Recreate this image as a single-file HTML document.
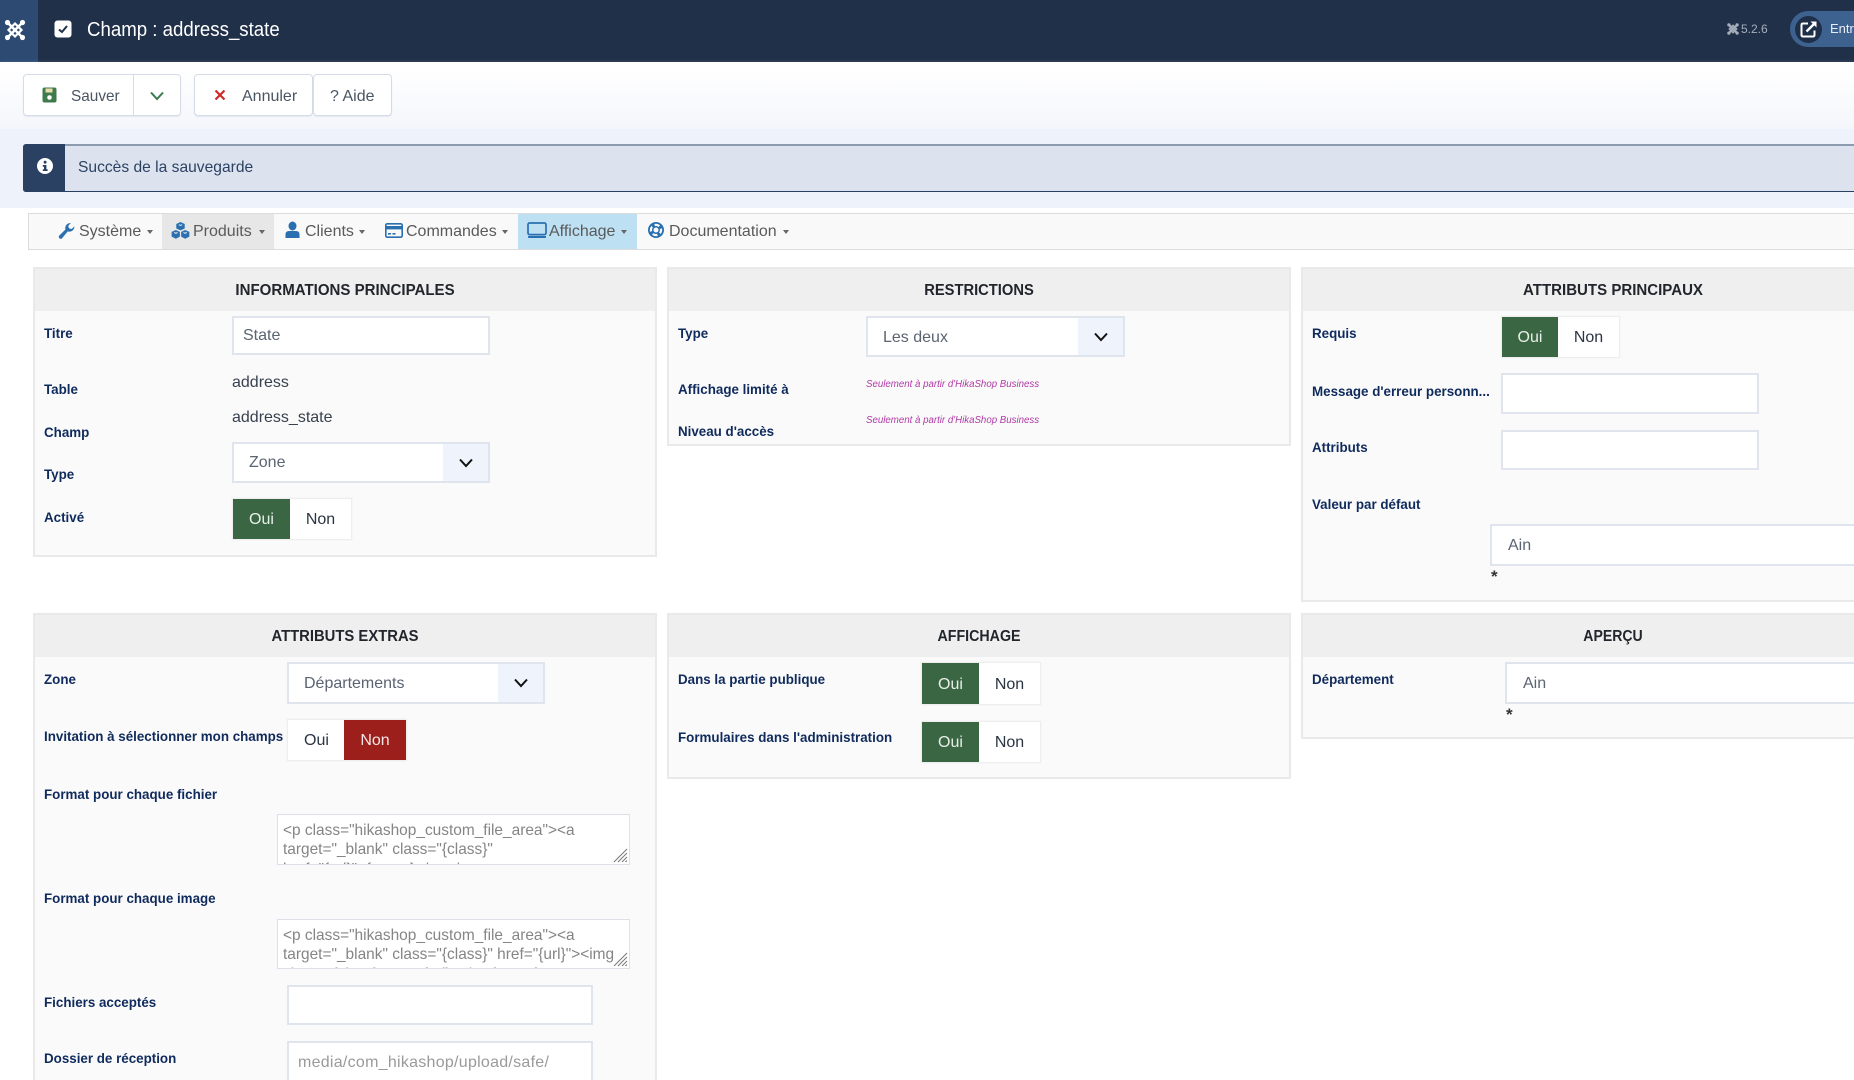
<!DOCTYPE html>
<html lang="fr"><head><meta charset="utf-8"><title>Champ : address_state</title>
<style>
html,body{margin:0;padding:0;width:1854px;height:1080px;overflow:hidden;background:#fff}
body{position:relative;font-family:"Liberation Sans",sans-serif;color:#333}
div,span,svg{position:absolute;box-sizing:border-box}
.t{white-space:nowrap;height:20px;line-height:20px}
.l{font-weight:bold;font-size:14px;color:#0f2a5c;white-space:nowrap;height:20px;line-height:20px;transform:scaleX(.955);transform-origin:0 50%}
.p{background:#fafafa;border:2px solid #e9e9e9;overflow:hidden}
.h{left:0;right:0;top:0;background:#efefef;height:42px}
.pt{font-weight:bold;font-size:16px;color:#22262c;text-align:center;white-space:nowrap;height:20px;line-height:20px;top:11.5px;left:0;right:0}
.i{background:#fff;border:2px solid #e0e4ec}
.v{font-size:16px;color:#5a6472;white-space:nowrap;height:20px;line-height:20px}
.ar{top:0;bottom:0;right:0;width:45px;background:#eff3fb}
.tg{background:#fff;border:1px solid #eeeeee;box-shadow:0 0 1px #e8e8e8}
.on{background:#3a6644;top:0;bottom:0;left:0}
.no{background:#9c1f1c;top:0;bottom:0;right:0}
.tt{font-size:16px;text-align:center;top:2px;bottom:0;display:flex;align-items:center;justify-content:center}
.btn{background:#fff;border:1px solid #d5dce8;border-radius:4px;box-shadow:0 1px 1px rgba(200,210,225,.4);height:42px;top:74px}
.m{font-size:16px;color:#5a5a5a;white-space:nowrap;height:20px;line-height:20px;top:222px}
.c{width:0;height:0;border-left:3.5px solid transparent;border-right:3.5px solid transparent;border-top:4px solid #666;top:230px}
.ta{background:#fff;border:1px solid #dde0e8;overflow:hidden;font-size:15.6px;line-height:19.5px;color:#858585}
.ta .x{left:5px;white-space:nowrap;height:20px;line-height:20px;transform:scaleX(.99);transform-origin:0 50%}
.s{font-family:"Liberation Sans",sans-serif;font-size:9.7px;font-style:italic;color:#b03aa6;white-space:nowrap;height:14px;line-height:14px}
.st{font-size:17px;font-weight:bold;color:#333;white-space:nowrap;height:20px;line-height:20px}
</style></head><body>

<!-- header -->
<div style="left:0;top:0;width:1854px;height:62px;background:#203048"></div>
<div style="left:0;top:0;width:38px;height:62px;background:#2c4a72"></div>
<svg style="left:4px;top:19px" width="22" height="22" viewBox="0 0 22 22" fill="none" stroke="#fff"><path d="M4 4 L18 18 M18 4 L4 18" stroke-width="2.6"/><path d="M11 4.5 L17.5 11 L11 17.5 L4.5 11 Z" stroke-width="2.2"/><circle cx="3.5" cy="3.5" r="2.6" fill="#fff" stroke="none"/><circle cx="18.5" cy="3.5" r="2.6" fill="#fff" stroke="none"/><circle cx="3.5" cy="18.5" r="2.6" fill="#fff" stroke="none"/><circle cx="18.5" cy="18.5" r="2.6" fill="#fff" stroke="none"/></svg>
<svg style="left:54px;top:20px" width="18" height="18" viewBox="0 0 18 18"><rect x="0.5" y="0.5" width="17" height="17" rx="3" fill="#fff"/><path d="M5 9.5 L8 12 L13 6" fill="none" stroke="#203048" stroke-width="2"/></svg>
<div class="t" style="left:87px;top:20px;font-size:20px;color:#fff;transform:scaleX(.932);transform-origin:0 50%">Champ : address_state</div>
<svg style="left:1727px;top:23px" width="12" height="12" viewBox="0 0 22 22" fill="none" stroke="#a6aebb"><path d="M4 4 L18 18 M18 4 L4 18" stroke-width="4"/><path d="M11 4.5 L17.5 11 L11 17.5 L4.5 11 Z" stroke-width="3"/><circle cx="3.5" cy="3.5" r="3" fill="#a6aebb" stroke="none"/><circle cx="18.5" cy="3.5" r="3" fill="#a6aebb" stroke="none"/><circle cx="3.5" cy="18.5" r="3" fill="#a6aebb" stroke="none"/><circle cx="18.5" cy="18.5" r="3" fill="#a6aebb" stroke="none"/></svg>
<div class="t" style="left:1741px;top:19px;font-size:12px;color:#a6aebb">5.2.6</div>
<div style="left:1790px;top:11px;width:90px;height:36px;border-radius:18px;background:#3e6290"></div>
<div style="left:1795px;top:16px;width:27px;height:27px;border-radius:50%;background:#1f2f48"></div>
<svg style="left:1800px;top:20px" width="18" height="18" viewBox="0 0 18 18" fill="none" stroke="#fff" stroke-width="2"><path d="M8 3.5 H3 Q1.5 3.5 1.5 5 V15 Q1.5 16.5 3 16.5 H13 Q14.5 16.5 14.5 15 V10.5"/><path d="M6.5 11.5 L15.5 2.5" stroke-width="2.4"/><path d="M10.5 1.5 H16.5 V7.5 Z" fill="#fff" stroke="none"/></svg>
<div class="t" style="left:1830px;top:19px;font-size:13px;color:#e8edf4">Entrer</div>

<!-- toolbar -->
<div style="left:0;top:62px;width:1854px;height:67px;background:linear-gradient(#fff 10%,#f4f6fb);box-shadow:0 1px 4px rgba(180,195,215,.45)"></div>
<div style="left:0;top:129px;width:1854px;height:79px;background:#eef3fb"></div>
<div class="btn" style="left:23px;width:158px"></div>
<div style="left:133px;top:74px;width:1px;height:42px;background:#d5dce8"></div>
<svg style="left:42px;top:87px" width="15" height="16" viewBox="0 0 15 16"><rect x="0.5" y="0.5" width="14" height="15" rx="2" fill="#3f7a4c"/><rect x="3.5" y="1.5" width="7" height="4" fill="#e8dcae"/><circle cx="7.5" cy="10.5" r="2.3" fill="#fff"/></svg>
<div class="t" style="left:71px;top:86.5px;font-size:16px;color:#4a5563;transform:scaleX(.96);transform-origin:0 50%">Sauver</div>
<svg style="left:149px;top:90px" width="16" height="12" viewBox="0 0 16 12" fill="none" stroke="#3a7a50" stroke-width="2"><path d="M2 2.5 L8 9 L14 2.5"/></svg>
<div class="btn" style="left:194px;width:119px"></div>
<svg style="left:214px;top:89px" width="12" height="12" viewBox="0 0 12 12" fill="none" stroke="#cf2a2a" stroke-width="2.2"><path d="M1.5 1.5 L10.5 10.5 M10.5 1.5 L1.5 10.5"/></svg>
<div class="t" style="left:242px;top:86.5px;font-size:16px;color:#4a5563">Annuler</div>
<div class="btn" style="left:313px;width:79px"></div>
<div class="t" style="left:330px;top:86.5px;font-size:16px;color:#4a5563">? Aide</div>

<!-- alert -->
<div style="left:23px;top:144px;width:1840px;height:48px;background:#dce3ef;border-top:2px solid #8d9bb0;border-bottom:1px solid #2a4163;border-radius:3px 0 0 3px"></div>
<div style="left:23px;top:144px;width:42px;height:48px;background:#2a4163;border-radius:3px 0 0 3px"></div>
<svg style="left:37px;top:158px" width="16" height="16" viewBox="0 0 16 16"><circle cx="8" cy="8" r="8" fill="#fff"/><rect x="6.7" y="2.8" width="2.8" height="2.8" rx="1" fill="#2a4163"/><path d="M5.8 7 H9.4 V11.2 H10.6 V13 H5.8 V11.2 H7 V8.8 H5.8 Z" fill="#2a4163"/></svg>
<div class="t" style="left:78px;top:158px;font-size:16px;color:#2c4263;transform:scaleX(.975);transform-origin:0 50%">Succès de la sauvegarde</div>

<!-- content bg -->
<div style="left:23px;top:208px;width:1831px;height:872px;background:#fff"></div>

<!-- menu -->
<div style="left:28px;top:213px;width:1830px;height:37px;background:#f9f9f9;border:1px solid #dcdcdc"></div>
<div style="left:162px;top:214px;width:112px;height:35px;background:#e7e7e7"></div>
<div style="left:518px;top:214px;width:119px;height:35px;background:#bde0f3"></div>
<svg style="left:58px;top:222px" width="17" height="18" viewBox="0 0 16 17"><path d="M15.5 4.2 A4.8 4.8 0 0 1 9.2 8.9 L3.6 15.6 A1.9 1.9 0 0 1 1 13 L7 7.1 A4.8 4.8 0 0 1 12 1 L9.6 3.8 L10.4 6 L12.8 6.6 Z" fill="#2a70b0"/></svg>
<div class="m" style="left:79px">Système</div><div class="c" style="left:147px"></div>
<svg style="left:171px;top:221px" width="19" height="19" viewBox="0 0 18 17" fill="#2a70b0"><path d="M9 0.5 L13 2.3 V6.6 L9 8.4 L5 6.6 V2.3 Z"/><path d="M4.6 8 L8.4 9.8 V14.3 L4.6 16.3 L0.6 14.3 V9.8 Z"/><path d="M13.4 8 L17.4 9.8 V14.3 L13.4 16.3 L9.6 14.3 V9.8 Z"/><path d="M7.4 3 L9 3.7 L10.6 3 M3 10.4 L4.6 11.1 L6.2 10.4 M11.8 10.4 L13.4 11.1 L15 10.4" stroke="#e7e7e7" fill="none"/></svg>
<div class="m" style="left:193px">Produits</div><div class="c" style="left:259px"></div>
<svg style="left:285px;top:221px" width="15" height="18" viewBox="0 0 15 17" fill="#2a70b0"><ellipse cx="7.5" cy="4.5" rx="4" ry="4.5"/><path d="M0.5 16.5 V13 Q0.5 9.5 4 9.5 H11 Q14.5 9.5 14.5 13 V16.5 Z"/></svg>
<div class="m" style="left:305px">Clients</div><div class="c" style="left:359px"></div>
<svg style="left:385px;top:223px" width="18" height="15" viewBox="0 0 18 15"><rect x="0.8" y="0.8" width="16.4" height="13.4" rx="1.5" fill="none" stroke="#2a70b0" stroke-width="1.6"/><rect x="1" y="3" width="16" height="3.4" fill="#2a70b0"/><rect x="3" y="10" width="3" height="1.6" fill="#2a70b0"/><rect x="7.5" y="10" width="3" height="1.6" fill="#2a70b0"/></svg>
<div class="m" style="left:406px">Commandes</div><div class="c" style="left:502px"></div>
<svg style="left:527px;top:222px" width="20" height="17" viewBox="0 0 20 17"><rect x="1" y="1" width="18" height="11.6" rx="1.6" fill="none" stroke="#2a70b0" stroke-width="1.7"/><path d="M1 14 H19 V15 Q19 16 18 16 H2 Q1 16 1 15 Z" fill="#2a70b0"/></svg>
<div class="m" style="left:549px">Affichage</div><div class="c" style="left:621px"></div>
<svg style="left:648px;top:222px" width="16" height="16" viewBox="0 0 16 16"><circle cx="8" cy="8" r="8" fill="#2a70b0"/><circle cx="8" cy="8" r="5.1" fill="none" stroke="#f9f9f9" stroke-width="2.2" stroke-dasharray="5 3" stroke-dashoffset="-6.5"/><circle cx="8" cy="8" r="2.5" fill="#f9f9f9"/></svg>
<div class="m" style="left:669px">Documentation</div><div class="c" style="left:783px"></div>

<!-- Panels -->
<div class="p" style="left:33px;top:267px;width:624px;height:290px"><div class="h"></div><div class="pt" style="transform:scaleX(.94)">INFORMATIONS PRINCIPALES</div></div>
<div class="p" style="left:667px;top:267px;width:624px;height:179px"><div class="h"></div><div class="pt" style="transform:scaleX(.92)">RESTRICTIONS</div></div>
<div class="p" style="left:1301px;top:267px;width:624px;height:335px"><div class="h"></div><div class="pt" style="transform:scaleX(.94)">ATTRIBUTS PRINCIPAUX</div></div>
<div class="p" style="left:33px;top:613px;width:624px;height:500px"><div class="h"></div><div class="pt" style="transform:scaleX(.926)">ATTRIBUTS EXTRAS</div></div>
<div class="p" style="left:667px;top:613px;width:624px;height:166px"><div class="h"></div><div class="pt" style="transform:scaleX(.89)">AFFICHAGE</div></div>
<div class="p" style="left:1301px;top:613px;width:624px;height:126px"><div class="h"></div><div class="pt" style="transform:scaleX(.88)">APERÇU</div></div>

<!-- Panel 1 -->
<div class="l" style="left:44px;top:323px">Titre</div>
<div class="i" style="left:232px;top:316px;width:258px;height:39px"></div>
<div class="v" style="left:243px;top:326px">State</div>
<div class="l" style="left:44px;top:379px">Table</div>
<div class="t" style="left:232px;top:373px;font-size:16px;color:#38414e">address</div>
<div class="t" style="left:232px;top:408px;font-size:16px;color:#38414e">address_state</div>
<div class="l" style="left:44px;top:422px">Champ</div>
<div class="i" style="left:232px;top:442px;width:258px;height:41px"><div class="ar"></div></div>
<svg style="left:458px;top:457px" width="16" height="12" viewBox="0 0 16 12" fill="none" stroke="#111" stroke-width="2"><path d="M2 2.5 L8 9 L14 2.5"/></svg>
<div class="v" style="left:249px;top:453px">Zone</div>
<div class="l" style="left:44px;top:464px">Type</div>
<div class="l" style="left:44px;top:507px">Activé</div>
<div class="tg" style="left:232px;top:498px;width:120px;height:42px"><div class="on" style="width:57px"></div><div class="tt" style="left:0;width:57px;color:#e8efe8">Oui</div><div class="tt" style="left:57px;right:0;color:#2a3442">Non</div></div>

<!-- Panel 2 -->
<div class="l" style="left:678px;top:323px">Type</div>
<div class="i" style="left:866px;top:316px;width:259px;height:41px"><div class="ar"></div></div>
<svg style="left:1093px;top:331px" width="16" height="12" viewBox="0 0 16 12" fill="none" stroke="#111" stroke-width="2"><path d="M2 2.5 L8 9 L14 2.5"/></svg>
<div class="v" style="left:883px;top:328px">Les deux</div>
<div class="l" style="left:678px;top:379px">Affichage limité à</div>
<div class="s" style="left:866px;top:378px">Seulement à partir d'HikaShop Business</div>
<div class="s" style="left:866px;top:414px">Seulement à partir d'HikaShop Business</div>
<div class="l" style="left:678px;top:421px">Niveau d'accès</div>

<!-- Panel 3 -->
<div class="l" style="left:1312px;top:323px">Requis</div>
<div class="tg" style="left:1501px;top:316px;width:119px;height:42px"><div class="on" style="width:56px"></div><div class="tt" style="left:0;width:56px;color:#e8efe8">Oui</div><div class="tt" style="left:56px;right:0;color:#2a3442">Non</div></div>
<div class="l" style="left:1312px;top:381px">Message d'erreur personn...</div>
<div class="i" style="left:1501px;top:373px;width:258px;height:41px"></div>
<div class="l" style="left:1312px;top:437px">Attributs</div>
<div class="i" style="left:1501px;top:430px;width:258px;height:40px"></div>
<div class="l" style="left:1312px;top:494px">Valeur par défaut</div>
<div class="i" style="left:1490px;top:524px;width:400px;height:42px"></div>
<div class="v" style="left:1508px;top:536px">Ain</div>
<div class="st" style="left:1491px;top:567px">*</div>

<!-- Panel 4 -->
<div class="l" style="left:44px;top:669px">Zone</div>
<div class="i" style="left:287px;top:662px;width:258px;height:42px"><div class="ar"></div></div>
<svg style="left:513px;top:677px" width="16" height="12" viewBox="0 0 16 12" fill="none" stroke="#111" stroke-width="2"><path d="M2 2.5 L8 9 L14 2.5"/></svg>
<div class="v" style="left:304px;top:674px">Départements</div>
<div class="l" style="left:44px;top:726px">Invitation à sélectionner mon champs</div>
<div class="tg" style="left:287px;top:719px;width:120px;height:42px"><div class="no" style="width:62px"></div><div class="tt" style="left:0;width:57px;color:#2a3442">Oui</div><div class="tt" style="right:0;width:62px;color:#f3e6e6">Non</div></div>
<div class="l" style="left:44px;top:784px">Format pour chaque fichier</div>
<div class="ta" style="left:277px;top:814px;width:353px;height:51px">
<div class="x" style="top:6px">&lt;p class="hikashop_custom_file_area"&gt;&lt;a</div>
<div class="x" style="top:25px">target="_blank" class="{class}"</div>
<div class="x" style="top:45px">href="{url}"&gt;{name}&lt;/a&gt;&lt;/p&gt;</div>
<svg style="right:1px;bottom:1px" width="15" height="15" viewBox="0 0 15 15" stroke="#777" stroke-width="1"><path d="M1 14 L14 1 M5 14 L14 5 M9 14 L14 9 M12.5 14 L14 12.5"/></svg></div>
<div class="l" style="left:44px;top:888px">Format pour chaque image</div>
<div class="ta" style="left:277px;top:919px;width:353px;height:50px">
<div class="x" style="top:6px">&lt;p class="hikashop_custom_file_area"&gt;&lt;a</div>
<div class="x" style="top:25px">target="_blank" class="{class}" href="{url}"&gt;&lt;img</div>
<div class="x" style="top:45px">class="{class}" src="{url}" alt="{name}"</div>
<svg style="right:1px;bottom:1px" width="15" height="15" viewBox="0 0 15 15" stroke="#777" stroke-width="1"><path d="M1 14 L14 1 M5 14 L14 5 M9 14 L14 9 M12.5 14 L14 12.5"/></svg></div>
<div class="l" style="left:44px;top:992px">Fichiers acceptés</div>
<div class="i" style="left:287px;top:985px;width:306px;height:40px"></div>
<div class="l" style="left:44px;top:1048px">Dossier de réception</div>
<div class="i" style="left:287px;top:1041px;width:306px;height:60px"></div>
<div class="t" style="left:298px;top:1053px;font-size:16px;color:#9a9a9a;letter-spacing:.27px">media/com_hikashop/upload/safe/</div>

<!-- Panel 5 -->
<div class="l" style="left:678px;top:669px">Dans la partie publique</div>
<div class="tg" style="left:921px;top:662px;width:120px;height:43px"><div class="on" style="width:57px"></div><div class="tt" style="left:0;width:57px;color:#e8efe8">Oui</div><div class="tt" style="left:57px;right:0;color:#2a3442">Non</div></div>
<div class="l" style="left:678px;top:727px">Formulaires dans l'administration</div>
<div class="tg" style="left:921px;top:721px;width:120px;height:42px"><div class="on" style="width:57px"></div><div class="tt" style="left:0;width:57px;color:#e8efe8">Oui</div><div class="tt" style="left:57px;right:0;color:#2a3442">Non</div></div>

<!-- Panel 6 -->
<div class="l" style="left:1312px;top:669px">Département</div>
<div class="i" style="left:1505px;top:662px;width:400px;height:42px"></div>
<div class="v" style="left:1523px;top:674px">Ain</div>
<div class="st" style="left:1506px;top:705px">*</div>
</body></html>
